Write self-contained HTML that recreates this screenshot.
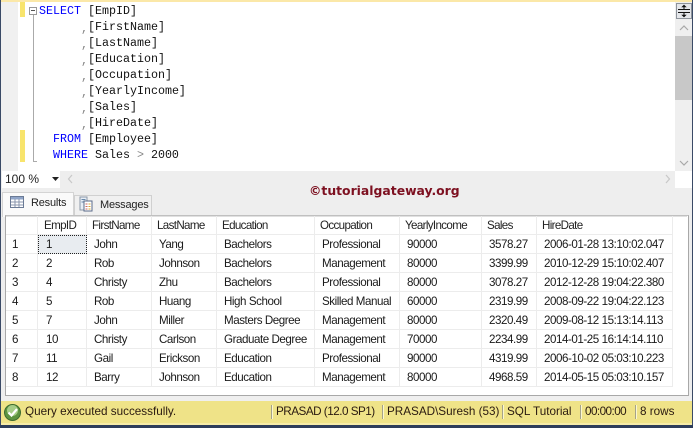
<!DOCTYPE html>
<html><head><meta charset="utf-8">
<style>
html,body{margin:0;padding:0}
body{width:693px;height:428px;overflow:hidden;position:relative;background:#eeeeee;font-family:"Liberation Sans",sans-serif;color:#111}
div,span.a{position:absolute}
.t{white-space:pre;line-height:16px}
.c{font-family:"Liberation Mono",monospace;font-size:11.67px;color:#111;white-space:pre;line-height:16px;position:absolute;margin-top:1px}
.k{color:#0000ff}
.g{color:#888}
.cm{position:absolute;left:81px;color:#888;font-family:"Liberation Mono",monospace;font-size:11.67px;line-height:16px;margin-top:1px}
.h,.d{position:absolute;font-size:11.6px;line-height:16px;white-space:pre;margin-top:1px}
.h{top:217px;color:#222;letter-spacing:-.65px}
.d{color:#1a1a1a;letter-spacing:-.45px}
.v{position:absolute;top:216px;height:171px;width:1px;background:#ececec}
.r{position:absolute;left:6px;width:666px;height:1px;background:#ececec}
.s{position:absolute;top:404px;font-size:11.7px;line-height:16px;white-space:pre;color:#2a1a10}
.sp{position:absolute;top:405px;width:1px;height:14px;background:#a5a38a;border-right:1px solid #fbf7d0}
</style></head><body>
<!-- editor -->
<div style="left:18px;top:0;width:657px;height:171px;background:#fff"></div>
<div style="left:0;top:0;width:18px;height:171px;background:#f0f0f0"></div>
<div style="left:0;top:0;width:693px;height:2px;background:#fbe8a8"></div>
<div style="left:20px;top:2px;width:5px;height:15px;background:#f8e46c"></div>
<div style="left:20px;top:130px;width:5px;height:32px;background:#f8e46c"></div>
<div style="left:29px;top:7px;width:6px;height:6px;border:1px solid #999;background:#fff"></div>
<div style="left:31px;top:10px;width:4px;height:1px;background:#555"></div>
<div style="left:33px;top:15px;width:1px;height:146px;background:#aaa"></div>
<div style="left:33px;top:161px;width:4px;height:1px;background:#aaa"></div>
<div class="c" style="left:39px;top:2px"><span class="k">SELECT</span> [EmpID]</div>
<div class="cm" style="top:20px">,</div><div class="c" style="left:88px;top:18px">[FirstName]</div>
<div class="cm" style="top:36px">,</div><div class="c" style="left:88px;top:34px">[LastName]</div>
<div class="cm" style="top:52px">,</div><div class="c" style="left:88px;top:50px">[Education]</div>
<div class="cm" style="top:68px">,</div><div class="c" style="left:88px;top:66px">[Occupation]</div>
<div class="cm" style="top:84px">,</div><div class="c" style="left:88px;top:82px">[YearlyIncome]</div>
<div class="cm" style="top:100px">,</div><div class="c" style="left:88px;top:98px">[Sales]</div>
<div class="cm" style="top:116px">,</div><div class="c" style="left:88px;top:114px">[HireDate]</div>
<div class="c" style="left:53px;top:130px"><span class="k">FROM</span> [Employee]</div>
<div class="c" style="left:53px;top:146px"><span class="k">WHERE</span> Sales <span class="g">&gt;</span> 2000</div>
<!-- scrollbar -->
<div style="left:675px;top:2px;width:17px;height:169px;background:#efefef"></div>
<div style="left:676px;top:3px;width:14px;height:14px;background:#e4e6ea;border:1px solid #8d939b"></div>
<svg style="position:absolute;left:677px;top:4px" width="14" height="14" viewBox="0 0 14 14"><path d="M1 5.500H13M1 8.500H13" stroke="#111" stroke-width="1"/><path d="M7 1V5M7 9V13" stroke="#111"/><path d="M5 3L7 1L9 3ZM5 11L7 13L9 11Z" fill="#111" stroke="#111" stroke-width=".6"/></svg>
<svg style="position:absolute;left:678px;top:24px" width="12" height="8"><path d="M2 6L6 2L10 6" fill="none" stroke="#a8a8a8" stroke-width="1.2"/></svg>
<svg style="position:absolute;left:678px;top:159px" width="12" height="8"><path d="M2 2L6 6L10 2" fill="none" stroke="#a8a8a8" stroke-width="1.2"/></svg>
<div style="left:675px;top:36px;width:17px;height:64px;background:#c8c8c8"></div>
<!-- zoom bar -->
<div style="left:0;top:171px;width:675px;height:17px;background:#eeeeee"></div>
<div style="left:675px;top:171px;width:17px;height:17px;background:#fff"></div>
<div style="left:2px;top:171px;width:58px;height:17px;background:#fff"></div>
<div class="t" style="left:5px;top:171px;font-size:12px;color:#222">100 %</div>
<svg style="position:absolute;left:52px;top:177px" width="7" height="5"><path d="M0 0H7L3.500 4Z" fill="#222"/></svg>
<svg style="position:absolute;left:67px;top:174px" width="7" height="10"><path d="M5 1L1.500 5L5 9" fill="none" stroke="#c8c8c8" stroke-width="1.2"/></svg>
<svg style="position:absolute;left:664px;top:174px" width="7" height="10"><path d="M2 1L5.500 5L2 9" fill="none" stroke="#c8c8c8" stroke-width="1.2"/></svg>
<!-- watermark -->
<div class="t" style="left:309px;top:183px;font-family:'DejaVu Sans',sans-serif;font-weight:bold;font-size:12.4px;color:#7d1020;letter-spacing:0">©tutorialgateway.org</div>
<!-- tabs -->
<div style="left:74px;top:195px;width:76px;height:20px;background:#f0f0f0;border:1px solid #d0d0d0;border-bottom:none"></div>
<div style="left:2px;top:192px;width:70px;height:24px;background:#fafafa;border:1px solid #d4d4d4;border-bottom:none"></div>
<svg style="position:absolute;left:10px;top:196px" width="14" height="13"><rect x=".5" y=".5" width="13" height="11" fill="#fff" stroke="#6a7a95"/><rect x="1" y="1" width="12" height="2.500" fill="#8fa4c8"/><path d="M1 6H13M1 9H13M5 3V11M9 3V11" stroke="#8a96ac"/></svg>
<svg style="position:absolute;left:79px;top:196px" width="15" height="17"><rect x="1" y="1" width="7" height="13" fill="#e8eef6" stroke="#8c98a8"/><rect x="5" y="5" width="8" height="10" fill="#fff" stroke="#5a6a88"/><path d="M6.500 8h2M6.500 10.500h2M6.500 13h2" stroke="#c66" /><path d="M9.500 8h2M9.500 10.500h2M9.500 13h2" stroke="#da3"/><path d="M2.500 3.500h4M2.500 6h2" stroke="#68a"/></svg>
<div class="t" style="left:31px;top:195px;font-size:11px;letter-spacing:-.2px;color:#222">Results</div>
<div class="t" style="left:100px;top:197px;font-size:11px;letter-spacing:-.2px;color:#222">Messages</div>
<!-- grid -->
<div style="left:5px;top:215px;width:682px;height:179px;background:#fff;border:1px solid #a8a8a8;border-top:1px solid #c0c0c0"></div>
<div style="left:6px;top:216px;width:681px;height:1px;background:#e0e0e0"></div>
<div class="v" style="left:37px"></div><div class="v" style="left:86px"></div><div class="v" style="left:151px"></div><div class="v" style="left:216px"></div><div class="v" style="left:314px"></div><div class="v" style="left:399px"></div><div class="v" style="left:481px"></div><div class="v" style="left:536px"></div><div class="v" style="left:672px"></div>
<div class="r" style="top:234px"></div><div class="r" style="top:253px"></div><div class="r" style="top:272px"></div><div class="r" style="top:291px"></div><div class="r" style="top:310px"></div><div class="r" style="top:329px"></div><div class="r" style="top:348px"></div><div class="r" style="top:367px"></div><div class="r" style="top:386px"></div>
<div style="left:38px;top:235px;width:47px;height:17px;background:#e8ecf0;border:1px dotted #222"></div>
<span class="h" style="left:44px">EmpID</span><span class="h" style="left:92px">FirstName</span><span class="h" style="left:157px">LastName</span><span class="h" style="left:222px">Education</span><span class="h" style="left:320px">Occupation</span><span class="h" style="left:405px">YearlyIncome</span><span class="h" style="left:487px">Sales</span><span class="h" style="left:542px">HireDate</span>

<span class="d" style="left:12px;top:236px">1</span><span class="d" style="left:46px;top:236px">1</span><span class="d" style="left:94px;top:236px">John</span><span class="d" style="left:159px;top:236px">Yang</span><span class="d" style="left:224px;top:236px">Bachelors</span><span class="d" style="left:322px;top:236px">Professional</span><span class="d" style="left:407px;top:236px">90000</span><span class="d" style="left:489px;top:236px">3578.27</span><span class="d" style="left:544px;top:236px">2006-01-28 13:10:02.047</span>

<span class="d" style="left:12px;top:255px">2</span><span class="d" style="left:46px;top:255px">2</span><span class="d" style="left:94px;top:255px">Rob</span><span class="d" style="left:159px;top:255px">Johnson</span><span class="d" style="left:224px;top:255px">Bachelors</span><span class="d" style="left:322px;top:255px">Management</span><span class="d" style="left:407px;top:255px">80000</span><span class="d" style="left:489px;top:255px">3399.99</span><span class="d" style="left:544px;top:255px">2010-12-29 15:10:02.407</span>

<span class="d" style="left:12px;top:274px">3</span><span class="d" style="left:46px;top:274px">4</span><span class="d" style="left:94px;top:274px">Christy</span><span class="d" style="left:159px;top:274px">Zhu</span><span class="d" style="left:224px;top:274px">Bachelors</span><span class="d" style="left:322px;top:274px">Professional</span><span class="d" style="left:407px;top:274px">80000</span><span class="d" style="left:489px;top:274px">3078.27</span><span class="d" style="left:544px;top:274px">2012-12-28 19:04:22.380</span>

<span class="d" style="left:12px;top:293px">4</span><span class="d" style="left:46px;top:293px">5</span><span class="d" style="left:94px;top:293px">Rob</span><span class="d" style="left:159px;top:293px">Huang</span><span class="d" style="left:224px;top:293px">High School</span><span class="d" style="left:322px;top:293px">Skilled Manual</span><span class="d" style="left:407px;top:293px">60000</span><span class="d" style="left:489px;top:293px">2319.99</span><span class="d" style="left:544px;top:293px">2008-09-22 19:04:22.123</span>

<span class="d" style="left:12px;top:312px">5</span><span class="d" style="left:46px;top:312px">7</span><span class="d" style="left:94px;top:312px">John</span><span class="d" style="left:159px;top:312px">Miller</span><span class="d" style="left:224px;top:312px">Masters Degree</span><span class="d" style="left:322px;top:312px">Management</span><span class="d" style="left:407px;top:312px">80000</span><span class="d" style="left:489px;top:312px">2320.49</span><span class="d" style="left:544px;top:312px">2009-08-12 15:13:14.113</span>

<span class="d" style="left:12px;top:331px">6</span><span class="d" style="left:46px;top:331px">10</span><span class="d" style="left:94px;top:331px">Christy</span><span class="d" style="left:159px;top:331px">Carlson</span><span class="d" style="left:224px;top:331px">Graduate Degree</span><span class="d" style="left:322px;top:331px">Management</span><span class="d" style="left:407px;top:331px">70000</span><span class="d" style="left:489px;top:331px">2234.99</span><span class="d" style="left:544px;top:331px">2014-01-25 16:14:14.110</span>

<span class="d" style="left:12px;top:350px">7</span><span class="d" style="left:46px;top:350px">11</span><span class="d" style="left:94px;top:350px">Gail</span><span class="d" style="left:159px;top:350px">Erickson</span><span class="d" style="left:224px;top:350px">Education</span><span class="d" style="left:322px;top:350px">Professional</span><span class="d" style="left:407px;top:350px">90000</span><span class="d" style="left:489px;top:350px">4319.99</span><span class="d" style="left:544px;top:350px">2006-10-02 05:03:10.223</span>

<span class="d" style="left:12px;top:369px">8</span><span class="d" style="left:46px;top:369px">12</span><span class="d" style="left:94px;top:369px">Barry</span><span class="d" style="left:159px;top:369px">Johnson</span><span class="d" style="left:224px;top:369px">Education</span><span class="d" style="left:322px;top:369px">Management</span><span class="d" style="left:407px;top:369px">80000</span><span class="d" style="left:489px;top:369px">4968.59</span><span class="d" style="left:544px;top:369px">2014-05-15 05:03:10.157</span>
<!-- status -->
<div style="left:0;top:396px;width:693px;height:5px;background:#efefef"></div>
<div style="left:1px;top:401px;width:691px;height:22px;background:#efe388"></div>
<div style="left:1px;top:423px;width:691px;height:2px;background:#f6eca8"></div>
<svg style="position:absolute;left:4px;top:404px" width="17" height="17" viewBox="0 0 17 17"><circle cx="8.500" cy="8.500" r="8" fill="#5d9440" stroke="#3d6b2e"/><circle cx="8.500" cy="6.500" r="5.500" fill="#a5cc86"/><path d="M4.500 8.500L7.500 11.500L13 5" fill="none" stroke="#fff" stroke-width="2.200"/></svg>
<div class="s" style="left:25px">Query executed successfully.</div>
<div class="sp" style="left:271px"></div>
<div class="s" style="left:276px;letter-spacing:-.5px">PRASAD (12.0 SP1)</div>
<div class="sp" style="left:382px"></div>
<div class="s" style="left:387px">PRASAD\Suresh (53)</div>
<div class="sp" style="left:502px"></div>
<div class="s" style="left:507px">SQL Tutorial</div>
<div class="sp" style="left:580px"></div>
<div class="s" style="left:585px;letter-spacing:-.55px">00:00:00</div>
<div class="sp" style="left:635px"></div>
<div class="s" style="left:640px">8 rows</div>
<!-- window frame -->
<div style="left:0;top:0;width:1px;height:428px;background:#3a4a66"></div>
<div style="left:692px;top:0;width:1px;height:428px;background:#3a4a66"></div>
<div style="left:0;top:425px;width:693px;height:3px;background:#2d3d5a"></div>
</body></html>
